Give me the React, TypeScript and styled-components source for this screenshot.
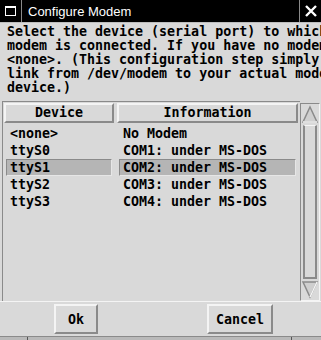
import React from 'react';
import styled, { createGlobalStyle } from 'styled-components';

const Global = createGlobalStyle`
  html, body {
    margin: 0;
    padding: 0;
    background: #d9d9d9;
  }
`;

const mono = `"DejaVu Sans Mono", "Liberation Mono", monospace`;

const Window = styled.div`
  width: 321px;
  height: 340px;
  display: flex;
  flex-direction: column;
  background: #d9d9d9;
  overflow: hidden;
  font-family: ${mono};
  font-size: 13.3px;
  font-weight: bold;
  color: #000;
`;

const TitleBar = styled.div`
  height: 22px;
  display: flex;
  background: #000;
  border-bottom: 1px solid #bdbdbd;
  flex-shrink: 0;
`;

const TitleCell = styled.div<{ $w?: number }>`
  ${(p) => (p.$w ? `width: ${p.$w}px;` : 'flex: 1;')}
  display: flex;
  align-items: center;
  justify-content: ${(p) => (p.$w ? 'center' : 'flex-start')};
  border-right: 1px solid #8a8a8a;
  padding-left: ${(p) => (p.$w ? 0 : 6)}px;
  color: #fff;
  font-family: "Liberation Sans", Arial, sans-serif;
  font-weight: normal;
  font-size: 13px;
  &:last-child {
    border-right: none;
  }
`;

const Message = styled.div`
  padding: 2px 0 0 7px;
  line-height: 14px;
  white-space: pre;
  overflow: hidden;
  height: 72px;
  flex-shrink: 0;
`;

const ListArea = styled.div`
  display: flex;
  margin: 4px 1px 0 2px;
  height: 200px;
`;

const ListBox = styled.div`
  flex: 1;
  display: flex;
  flex-direction: column;
  border-left: 1px solid #8a8a8a;
  border-top: 1px solid #8a8a8a;
  padding: 1px 1px 0 1px;
`;

const HeaderRow = styled.div`
  display: grid;
  grid-template-columns: 110px 181px;
  gap: 3px;
`;

const HeaderCell = styled.div`
  height: 16px;
  border-top: 2px solid #f4f4f4;
  border-left: 2px solid #f4f4f4;
  border-bottom: 2px solid #8a8a8a;
  border-right: 2px solid #8a8a8a;
  display: flex;
  align-items: center;
  justify-content: center;
  line-height: 16px;
`;

const Rows = styled.div`
  display: flex;
  flex-direction: column;
  padding-top: 1px;
`;

const Row = styled.div`
  display: grid;
  grid-template-columns: 110px 181px;
  gap: 3px;
  height: 17px;
`;

const Cell = styled.div<{ $sel?: boolean }>`
  display: flex;
  align-items: center;
  padding-left: 3px;
  margin: 1px 2px 0 2px;
  white-space: pre;
  background: ${(p) => (p.$sel ? '#b5b5b5' : 'transparent')};
  border: 1px solid ${(p) => (p.$sel ? '#8a8a8a' : 'transparent')};
  border-right-color: ${(p) => (p.$sel ? '#e6e6e6' : 'transparent')};
  border-bottom-color: ${(p) => (p.$sel ? '#e6e6e6' : 'transparent')};
`;

const ScrollBar = styled.div`
  width: 18px;
  display: flex;
  flex-direction: column;
  border-right: 1px solid #f4f4f4;
  border-left: 1px solid #8a8a8a;
  border-top: 1px solid #8a8a8a;
  border-bottom: 1px solid #f4f4f4;
  margin-top: 2px;
`;

const Arrow = styled.svg`
  display: block;
  width: 18px;
  height: 20px;
  flex-shrink: 0;
`;

const Thumb = styled.div`
  flex: 1;
  margin: 1px 2px;
  border-left: 2px solid #8a8a8a;
  border-right: 2px solid #8a8a8a;
  border-top: 1px solid #f4f4f4;
  border-bottom: 2px solid #8a8a8a;
`;

const ButtonRow = styled.div`
  height: 34px;
  border-top: 1px solid #f4f4f4;
  display: flex;
  align-items: center;
  flex-shrink: 0;
`;

const Button = styled.div<{ $left: number; $w: number }>`
  margin-left: ${(p) => p.$left}px;
  width: ${(p) => p.$w}px;
  height: 26px;
  border-top: 2px solid #f4f4f4;
  border-left: 2px solid #f4f4f4;
  border-bottom: 2px solid #8a8a8a;
  border-right: 2px solid #8a8a8a;
  display: flex;
  align-items: center;
  justify-content: center;
`;

const Underlay = styled.div`
  flex: 1;
  background: #b9b9b9;
  border-top: 1px solid #8a8a8a;
  display: grid;
  grid-template-columns: 28px 264px 1fr;
`;

const UnderlayCell = styled.div`
  border-right: 1px solid #555;
  &:last-child {
    border-right: none;
  }
`;

const rows = [
  ['<none>', 'No Modem'],
  ['ttyS0', 'COM1: under MS-DOS'],
  ['ttyS1', 'COM2: under MS-DOS'],
  ['ttyS2', 'COM3: under MS-DOS'],
  ['ttyS3', 'COM4: under MS-DOS'],
];

const message = [
  'Select the device (serial port) to which your',
  'modem is connected. If you have no modem, select',
  '<none>. (This configuration step simply creates a',
  'link from /dev/modem to your actual modem',
  'device.)',
].join('\n');

export default function App() {
  return (
    <Window>
      <Global />
      <TitleBar>
        <TitleCell $w={21}>
          <svg width="11" height="10" viewBox="0 0 11 10">
            <rect x="0.5" y="0.5" width="10" height="9" fill="none" stroke="#fff" />
            <rect x="0" y="0" width="11" height="2" fill="#fff" />
          </svg>
        </TitleCell>
        <TitleCell>Configure Modem</TitleCell>
        <TitleCell $w={21}>
          <svg width="12" height="12" viewBox="0 0 12 12">
            <path d="M1 1 L11 11 M11 1 L1 11" stroke="#fff" strokeWidth="2.4" />
          </svg>
        </TitleCell>
      </TitleBar>
      <Message>{message}</Message>
      <ListArea>
        <ListBox>
          <HeaderRow>
            <HeaderCell>Device</HeaderCell>
            <HeaderCell>Information</HeaderCell>
          </HeaderRow>
          <Rows>
            {rows.map(([dev, info]) => (
              <Row key={dev}>
                <Cell $sel={dev === 'ttyS1'}>{dev}</Cell>
                <Cell $sel={dev === 'ttyS1'}>{info}</Cell>
              </Row>
            ))}
          </Rows>
        </ListBox>
        <ScrollBar>
          <Arrow viewBox="0 0 18 20">
            <polygon points="9,3 16,18 2,18" fill="#cfcfcf" stroke="#8a8a8a" strokeWidth="1.5" />
            <path d="M2 18 L16 18" stroke="#f4f4f4" strokeWidth="1.5" />
          </Arrow>
          <Thumb />
          <Arrow viewBox="0 0 18 20">
            <polygon points="2,2 16,2 9,17" fill="#cfcfcf" stroke="#8a8a8a" strokeWidth="1.5" />
            <path d="M16 2 L9 17" stroke="#f4f4f4" strokeWidth="1.5" />
          </Arrow>
        </ScrollBar>
      </ListArea>
      <ButtonRow>
        <Button $left={54} $w={40}>Ok</Button>
        <Button $left={109} $w={62}>Cancel</Button>
      </ButtonRow>
      <Underlay>
        <UnderlayCell />
        <UnderlayCell />
        <UnderlayCell />
      </Underlay>
    </Window>
  );
}
